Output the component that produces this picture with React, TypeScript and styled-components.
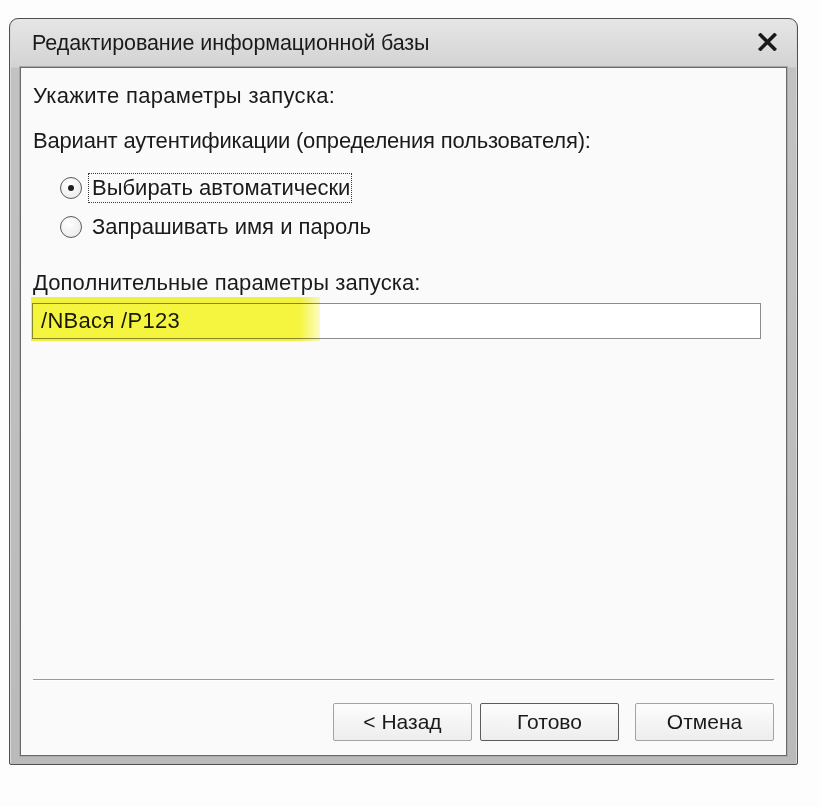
import React, { useState } from 'react'
import styled, { createGlobalStyle } from 'styled-components'

const GlobalStyle = createGlobalStyle`
  body {
    margin : 0;
    background : #fdfdfd;
    font-family : "Liberation Sans", Arial, sans-serif;
    color : #1a1a1a;
  }
`

const Page = styled.div`
  padding : 18px 0 0 9px;
`
const Window = styled.div`
  box-sizing : border-box;
  width : 789px;
  height : 747px;
  display : flex;
  flex-direction : column;
  padding : 0 10px 8px 10px;
  border : 1px solid #4f4f4f;
  border-radius : 9px 9px 2px 2px;
  background : linear-gradient(180deg, #e6e6e6 0px, #d3d3d3 48px, #c2c2c2 49px, #bababa 100%);
  box-shadow : inset 1px 0 0 #d8d8d8, inset -1px 0 0 #d8d8d8;
`
const TitleBar = styled.div`
  height : 48px;
  display : flex;
  align-items : center;
  justify-content : space-between;
  padding : 0 10px 0 12px;
`
const Title = styled.div`
  font-size : 21.5px;
  letter-spacing : -0.1px;
`
const CloseButton = styled.div`
  width : 19px;
  height : 18px;
  display : flex;
  margin-top : -3px;
  cursor : pointer;
`
const Panel = styled.div`
  flex : 1;
  display : flex;
  flex-direction : column;
  padding : 16px 12px 14px 11px;
  border : 1px solid #6a6a6a;
  background : #fafafa;
  box-shadow : 0 0 0 1px #a9a9a9;
`
const Label = styled.div<{ $top: number; $spacing?: number }>`
  margin-top : ${p => p.$top}px;
  font-size : 22px;
  line-height : 24px;
  letter-spacing : ${p => p.$spacing || 0}px;
  padding-left : 1px;
`
const RadioRow = styled.label<{ $top: number }>`
  margin-top : ${p => p.$top}px;
  margin-left : 28px;
  height : 30px;
  display : flex;
  align-items : center;
  gap : 6px;
  cursor : pointer;
`
const RadioCircle = styled.span<{ $checked: boolean }>`
  box-sizing : border-box;
  width : 22px;
  height : 22px;
  border-radius : 50%;
  border : 1px solid #5a5a5a;
  background : radial-gradient(circle at 40% 35%, #ffffff, #e6e6e6);
  display : flex;
  align-items : center;
  justify-content : center;
  &::after {
    content : '';
    width : 6px;
    height : 6px;
    border-radius : 50%;
    background : #1e1e1e;
    display : ${p => (p.$checked ? 'block' : 'none')};
  }
`
const RadioText = styled.span<{ $focused: boolean }>`
  font-size : 22px;
  line-height : 26px;
  padding : 1px 1px 1px 3px;
  border : 1px dotted ${p => (p.$focused ? '#3a3a3a' : 'transparent')};
`
const InputWrap = styled.div`
  position : relative;
  margin-top : 8px;
  width : 729px;
`
const TextInput = styled.input`
  box-sizing : border-box;
  width : 100%;
  height : 36px;
  border : 1px solid #8c8c8c;
  background : #ffffff;
  font-family : "Liberation Sans", Arial, sans-serif;
  font-size : 22px;
  letter-spacing : 0.3px;
  color : #1a1a1a;
  padding : 0 8px;
  outline : none;
`
const Highlight = styled.div`
  position : absolute;
  left : -1px;
  top : -6px;
  width : 289px;
  height : 44px;
  background : linear-gradient(90deg, #f5f540 93%, rgba(245, 245, 64, 0.3) 100%);
  mix-blend-mode : multiply;
  pointer-events : none;
`
const Spacer = styled.div`
  flex : 1;
`
const Separator = styled.div`
  height : 1px;
  margin-left : 1px;
  background : #9a9a9a;
  box-shadow : 0 1px 0 #ffffff;
`
const ButtonRow = styled.div`
  margin-top : 23px;
  display : flex;
  justify-content : flex-end;
`
const Button = styled.button<{ $primary?: boolean; $gap?: number }>`
  box-sizing : border-box;
  width : 139px;
  height : 38px;
  margin-left : ${p => p.$gap || 0}px;
  border : 1px solid ${p => (p.$primary ? '#5c5c5c' : '#a3a3a3')};
  border-radius : 2px;
  background : linear-gradient(180deg, #fdfdfd, #ededed);
  font-family : "Liberation Sans", Arial, sans-serif;
  font-size : 21px;
  color : #1a1a1a;
  padding : 0;
  cursor : pointer;
`

function App() {
  const [mode, setMode] = useState('auto')
  const [params, setParams] = useState('/NBася /P123')

  return (
    <Page>
      <GlobalStyle />
      <Window>
        <TitleBar>
          <Title>Редактирование информационной базы</Title>
          <CloseButton>
            <svg width="19" height="18" viewBox="0 0 19 18">
              <path d="M2.5 2 L16.5 16 M16.5 2 L2.5 16" stroke="#1a1a1a" strokeWidth="3.6" strokeLinecap="square" />
            </svg>
          </CloseButton>
        </TitleBar>
        <Panel>
          <Label $top={0} $spacing={0.3}>Укажите параметры запуска:</Label>
          <Label $top={21} $spacing={-0.2}>Вариант аутентификации (определения пользователя):</Label>
          <RadioRow $top={20} onClick={() => setMode('auto')}>
            <RadioCircle $checked={mode === 'auto'} />
            <RadioText $focused={true}>Выбирать автоматически</RadioText>
          </RadioRow>
          <RadioRow $top={9} onClick={() => setMode('ask')}>
            <RadioCircle $checked={mode === 'ask'} />
            <RadioText $focused={false}>Запрашивать имя и пароль</RadioText>
          </RadioRow>
          <Label $top={29} $spacing={0.1}>Дополнительные параметры запуска:</Label>
          <InputWrap>
            <TextInput value={params} onChange={(event) => setParams(event.target.value)} />
            <Highlight />
          </InputWrap>
          <Spacer />
          <Separator />
          <ButtonRow>
            <Button>&lt; Назад</Button>
            <Button $primary $gap={8}>Готово</Button>
            <Button $gap={16}>Отмена</Button>
          </ButtonRow>
        </Panel>
      </Window>
    </Page>
  )
}

export default App
